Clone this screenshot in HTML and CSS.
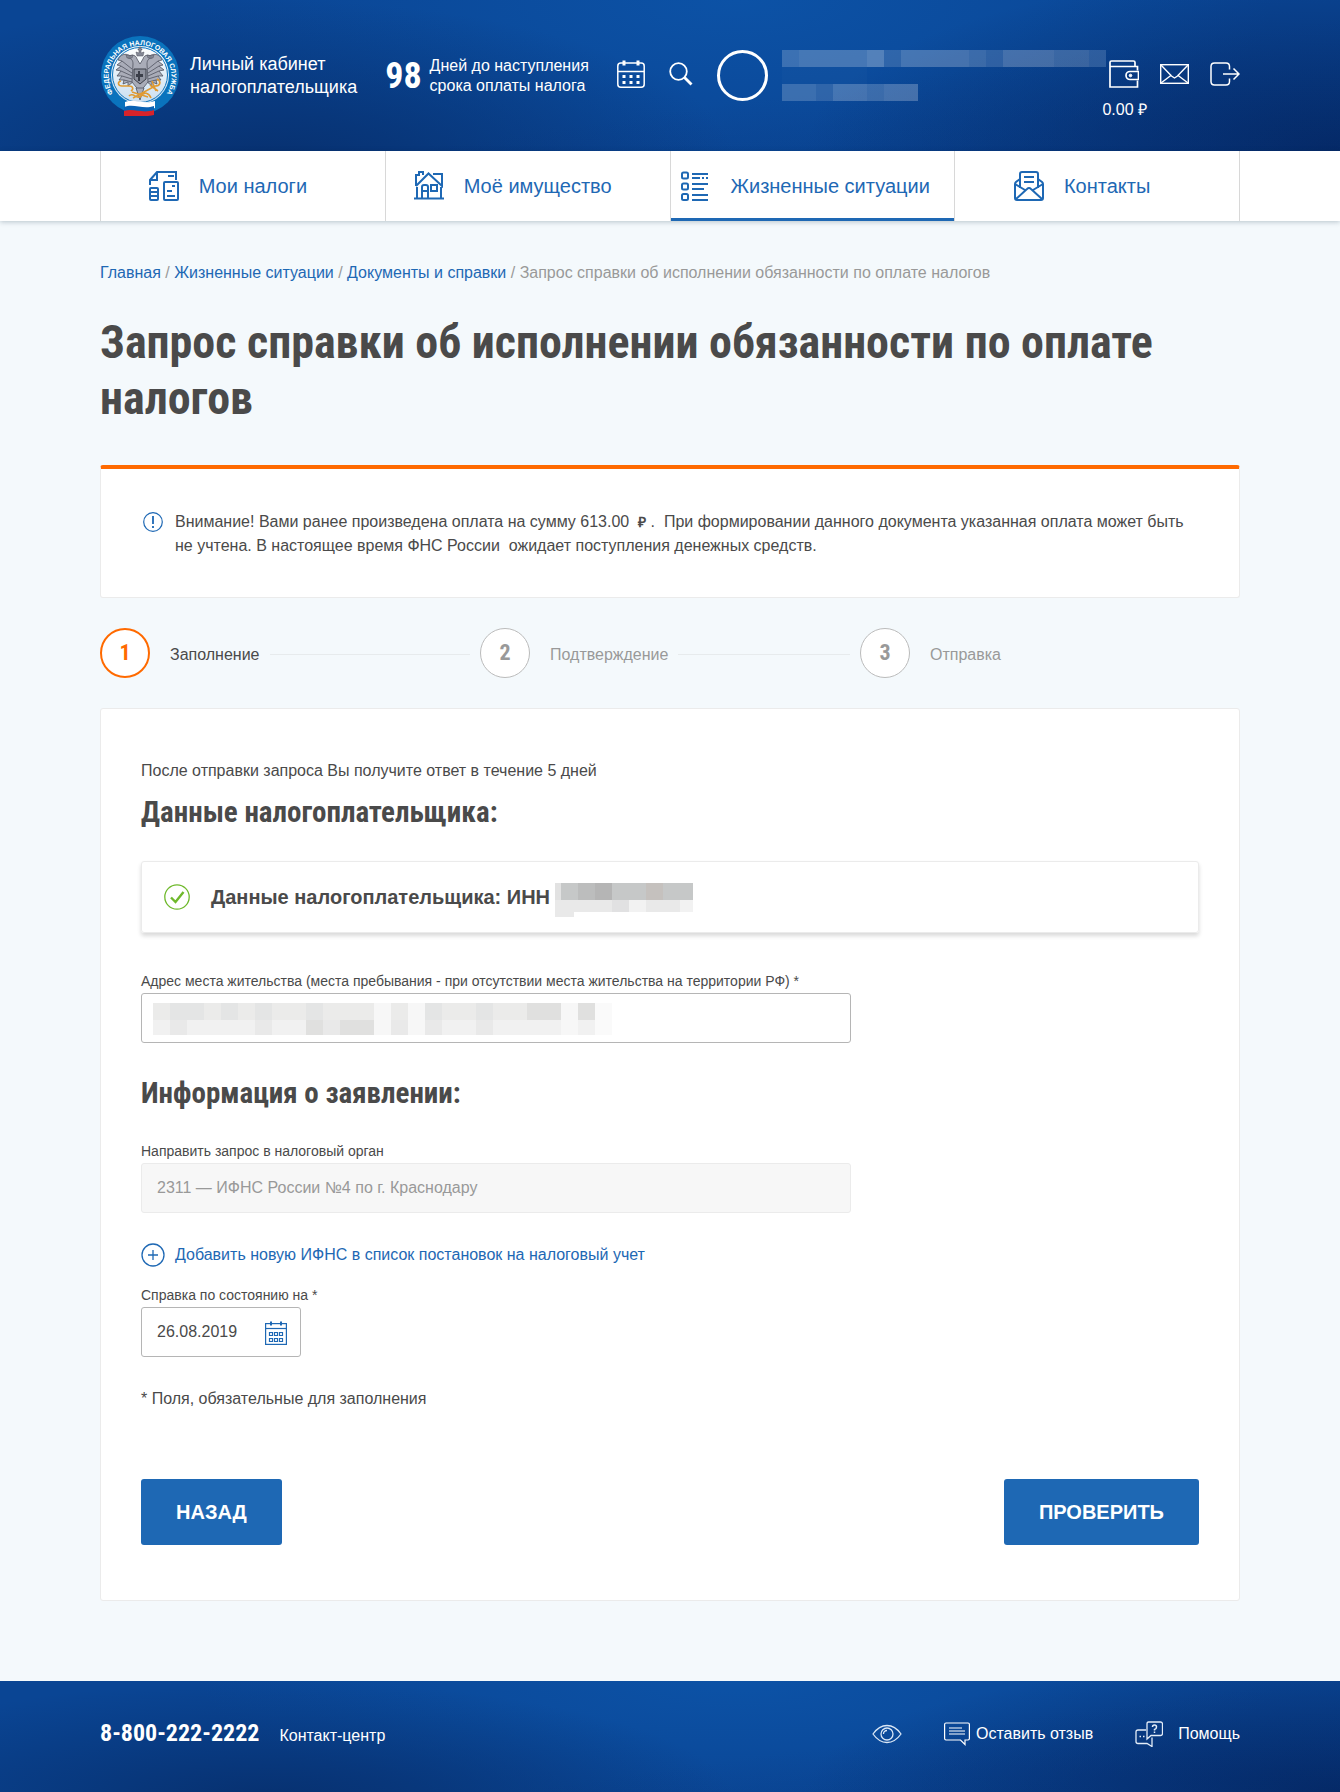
FILE: index.html
```html
<!DOCTYPE html>
<html lang="ru">
<head>
    <meta charset="UTF-8">
    <meta name="viewport" content="width=device-width, initial-scale=1.0">
    <title>Личный кабинет налогоплательщика</title>
    <link rel="stylesheet" href="styles.css">
</head>
<body>
    <header class="header">
        <div class="container header-inner">
            <a class="logo" href="#">
                <svg class="logo-emblem" width="80" height="80" viewBox="0 0 80 80" aria-hidden="true">
                    <defs>
                        <path id="ring" d="M15.500 60.500A31.500 31.500 0 1 1 64.500 60.500"/>
                        <linearGradient id="disc" x1="0" y1="0" x2="0" y2="1">
                            <stop offset="0" stop-color="#ffffff"/>
                            <stop offset="1" stop-color="#c9def0"/>
                        </linearGradient>
                    </defs>
                    <circle cx="40" cy="39" r="39" fill="#0a73bd"/>
                    <circle cx="40" cy="39" r="29" fill="url(#disc)"/>
                    <circle cx="40" cy="39" r="27.500" fill="none" stroke="#0a73bd" stroke-width="1"/>
                    <text class="logo-ring-text"><textPath href="#ring" startOffset="50%" text-anchor="middle">ФЕДЕРАЛЬНАЯ НАЛОГОВАЯ СЛУЖБА</textPath></text>
                    <!-- орёл -->
                    <g fill="#a9acb8" stroke="#50535f" stroke-width="0.800">
                        <path d="M36 27C31 16 21 16 18 24l4 1-5 4 4 1-5 4 5 1-4 5 5 0-3 4 5 0-1 4 5-2 0 4 6-5z"/>
                        <path d="M44 27C49 16 59 16 62 24l-4 1 5 4-4 1 5 4-5 1 4 5-5 0 3 4-5 0 1 4-5-2 0 4-6-5z"/>
                        <path d="M33 28c0-4-2-6-5-6 1-4 8-4 9 1l3 5 3-5c1-5 8-5 9-1-3 0-5 2-5 6l1 18-8 10-8-10z"/>
                        <path d="M36 52l4 12 4-12z"/>
                    </g>
                    <g fill="none" stroke="#50535f" stroke-width="0.800">
                        <path d="M22 25l10 8M21 30l11 7M21 35l11 5M22 40l10 3M24 44l8 2"/>
                        <path d="M58 25l-10 8M59 30l-11 7M59 35l-11 5M58 40l-10 3M56 44l-8 2"/>
                    </g>
                    <path d="M37 20l-1-4 3 1v-3h-1v-1h1v-2h2v2h1v1h-1v3l3-1-1 4zM27 22l-1-3 4 1 3-1-1 3zM48 22l-1-3 3 1 4-1-1 3z" fill="#858996" stroke="#50535f" stroke-width="0.500"/>
                    <path d="M34 33h12v10l-6 5-6-5z" fill="#8f929e" stroke="#3b3e49" stroke-width="1"/>
                    <path d="M38 35h2v3h3v3h-3v4h-2v-4h-2v-3h2z" fill="#3b3e49"/>
                    <g fill="none" stroke="#e09a32" stroke-width="1.600">
                        <path d="M21 45c-4 1-3 5 1 5l7 0c4 0 5 3 2 5"/>
                        <path d="M57 43c5 3 3 7-2 7l-22 12M29 60c4-5 9 5 12 0s8-3 10 2"/>
                        <path d="M50 49l8 6M32 56l16 5M52 45l4 10"/>
                    </g>
                    <!-- флаг -->
                    <path d="M25 66c9-4 18 3 30-1v7c-12 4-21-2-30 1z" fill="#fff"/>
                    <path d="M24 71c10-4 19 3 30-1v6c-12 4-20-2-30 1z" fill="#0a62b4"/>
                    <path d="M24 75c10-3 18 3 30-1v5c-6 2-22 1-30 1z" fill="#d8232a"/>
                </svg>
                <span class="logo-text">Личный кабинет<br>налогоплательщика</span>
            </a>

            <div class="countdown">
                <span class="countdown-number">98</span>
                <span class="countdown-text">Дней до наступления<br>срока оплаты налога</span>
            </div>

            <div class="header-tools">
                <a class="icon-link" href="#" aria-label="Налоговый календарь">
                    <svg width="28" height="28" viewBox="0 0 28 28" fill="none" stroke="#fff" stroke-width="1.500">
                        <rect x="0.800" y="3" width="26.400" height="24.200" rx="3"/>
                        <path d="M1 11.500h26"/>
                        <path d="M7 0.500v5M21 0.500v5" stroke-width="3"/>
                        <path d="M5.500 16.500h3M12.500 16.500h3M19.500 16.500h3M5.500 22.500h3M12.500 22.500h3M19.500 22.500h3" stroke-width="3"/>
                    </svg>
                </a>
                <a class="icon-link" href="#" aria-label="Поиск">
                    <svg width="24" height="24" viewBox="0 0 24 24" fill="none" stroke="#fff">
                        <circle cx="9.500" cy="9.500" r="8.300" stroke-width="1.800"/>
                        <path d="M15.500 15.500l7 7" stroke-width="2.800"/>
                    </svg>
                </a>
            </div>

            <div class="user">
                <span class="user-avatar"></span>
                <svg class="user-name" width="324" height="51" viewBox="0 0 324 51" aria-hidden="true">
                    <g fill="#fff">
                        <path d="M0 0h324v17H0zM0 34h136v17H0z" fill-opacity="0.200"/>
                        <path d="M17 0h68v17H17zM85 0h17v17H85zM119 0h34v17h-34zM153 0h34v17h-34zM221 0h51v17h-51z" fill-opacity="0.050"/>
                        <path d="M85 0h17v17H85z" fill-opacity="0.080"/>
                        <path d="M51 34h34v17H51zM102 34h34v17h-34z" fill-opacity="0.050"/>
                        <path d="M0 17h85v17H0z" fill-opacity="0.020"/>
                    </g>
                    <path d="M102 0h17v17h-17zM204 0h17v17h-17zM307 0h17v17h-17zM34 34h17v17H34z" fill="#0b4798" fill-opacity="0.250"/>
                </svg>
            </div>

            <div class="header-actions">
                <a class="icon-link wallet" href="#" aria-label="Кошелёк">
                    <svg width="30" height="28" viewBox="0 0 30 28" fill="none" stroke="#fff" stroke-width="1.700">
                        <path d="M28.500 10.500V6.500H1V2.500Q1 1 2.500 1h22q1.500 0 1.500 1.500V6M1 5v22h27.500v-6.500"/>
                        <path d="M29.500 11.500h-8.500a4 4 0 0 0 0 8h8.500z"/>
                        <circle cx="21.500" cy="15.500" r="1.300" fill="#fff" stroke-width="1"/>
                    </svg>
                    <span class="wallet-amount">0.00 ₽</span>
                </a>
                <a class="icon-link" href="#" aria-label="Сообщения">
                    <svg width="29" height="20" viewBox="0 0 29 20" fill="none" stroke="#fff" stroke-width="1.400">
                        <rect x="0.700" y="0.700" width="27.600" height="18.600"/>
                        <path d="M1 1l10.500 11 3 2 3-2L28 1M1 19l10.500-8M28 19l-10.500-8"/>
                    </svg>
                </a>
                <a class="icon-link" href="#" aria-label="Выход">
                    <svg width="30" height="24" viewBox="0 0 30 24" fill="none" stroke="#fff" stroke-width="1.500">
                        <path d="M19.500 7.500V4.500q0-3.500-3.500-3.500H4.500Q1 1 1 4.500v15Q1 23 4.500 23H16q3.500 0 3.500-3.500v-3"/>
                        <path d="M13 12h16M23.500 6.500l5.500 5.500-5.500 5.500"/>
                    </svg>
                </a>
            </div>
        </div>
    </header>

    <nav class="nav">
        <ul class="container nav-list">
            <li class="nav-item">
                <a class="nav-link" href="#">
                    <svg width="30" height="30" viewBox="0 0 30 30" fill="none" stroke="#1e68b4" stroke-width="2">
                        <path d="M1 14V9l7-8h19v8M1 9h7V1M19 5h6"/>
                        <rect x="15" y="11" width="14" height="18" rx="1"/>
                        <path d="M23 15h3M18 20h5M18 25h8"/>
                        <rect x="1" y="17" width="8" height="12" rx="1"/>
                        <path d="M1 21h8M1 25h8"/>
                    </svg>
                    <span>Мои налоги</span>
                </a>
            </li>
            <li class="nav-item">
                <a class="nav-link" href="#">
                    <svg width="30" height="29" viewBox="0 0 30 29" fill="none" stroke="#1e68b4" stroke-width="2">
                        <path d="M2 15V4h3V1h4v3M2 15L14.500 2.500 28 15V3h-9M3 16v11M27 16v11M0 27.500h30"/>
                        <path d="M8 27V16q0-2 2-2h2q2 0 2 2v11M8 20h6"/>
                        <rect x="17" y="14" width="6" height="6"/>
                    </svg>
                    <span>Моё имущество</span>
                </a>
            </li>
            <li class="nav-item active">
                <a class="nav-link" href="#">
                    <svg width="30" height="30" viewBox="0 0 30 30" fill="none" stroke="#1e68b4" stroke-width="2">
                        <rect x="1" y="1.500" width="6" height="6" rx="1.500"/>
                        <rect x="1" y="12.500" width="6" height="6" rx="1.500"/>
                        <rect x="1" y="23" width="6" height="6" rx="1.500"/>
                        <path d="M11 3h16M11 7h8M21 7h2M25 7h2M11 13h16M11 18h12M11 24h16M11 29h16"/>
                    </svg>
                    <span>Жизненные ситуации</span>
                </a>
            </li>
            <li class="nav-item">
                <a class="nav-link" href="#">
                    <svg width="30" height="30" viewBox="0 0 30 30" fill="none" stroke="#1e68b4" stroke-width="2">
                        <path d="M6 17V3q0-2 2-2h14q2 0 2 2v14"/>
                        <path d="M6 8l-4 3q-1 1-1 2v14q0 2 2 2h24q2 0 2-2V13q0-1-1-2l-4-3"/>
                        <path d="M1 13l10 6M29 13l-10 6M2 28l11-10q2-2 4 0l11 10M10 6h10M10 11h10"/>
                    </svg>
                    <span>Контакты</span>
                </a>
            </li>
        </ul>
    </nav>

    <main class="container main">
        <div class="breadcrumbs">
            <a href="#">Главная</a> / <a href="#">Жизненные ситуации</a> / <a href="#">Документы и справки</a> / Запрос справки об исполнении обязанности по оплате налогов
        </div>

        <h1>Запрос справки об исполнении обязанности по оплате налогов</h1>

        <div class="notice">
            <svg class="notice-icon" width="20" height="20" viewBox="0 0 20 20" fill="none" stroke="#1e68b4">
                <circle cx="10" cy="10" r="9.300" stroke-width="1.200"/>
                <path d="M10 4v8M10 14v2" stroke-width="1.800"/>
            </svg>
            <p>Внимание! Вами ранее произведена оплата на сумму 613.00 &nbsp;<b class="ruble">₽</b>&nbsp;. &nbsp;При формировании данного документа указанная оплата может быть не учтена. В настоящее время ФНС России &nbsp;ожидает поступления денежных средств.</p>
        </div>

        <ol class="steps">
            <li class="step current">
                <span class="step-number">1</span>
                <span class="step-label">Заполнение</span>
            </li>
            <li class="step">
                <span class="step-number">2</span>
                <span class="step-label">Подтверждение</span>
            </li>
            <li class="step">
                <span class="step-number">3</span>
                <span class="step-label">Отправка</span>
            </li>
        </ol>

        <form class="card">
            <p>После отправки запроса Вы получите ответ в течение 5 дней</p>
            <h2>Данные налогоплательщика:</h2>

            <div class="taxpayer">
                <svg width="27" height="27" viewBox="0 0 27 27" fill="none" stroke="#6fb92c">
                    <circle cx="13" cy="13" r="12.200" stroke-width="1.300"/>
                    <path d="M7 13.500l4.500 4.500 8-10" stroke-width="2.400"/>
                </svg>
                <span class="taxpayer-title">Данные налогоплательщика: ИНН</span>
                <svg class="taxpayer-inn" width="138" height="34" viewBox="0 0 138 34" aria-hidden="true">
                    <path d="M0 0h138v17H0z" fill="#c6c8c8"/>
                    <path d="M0 0h6v17H0z" fill="#e2e2e2"/>
                    <path d="M23 0h17v17H23z" fill="#bcbdbd"/>
                    <path d="M40 0h17v17H40z" fill="#b5b5b5"/>
                    <path d="M91 0h17v17H91z" fill="#c5c1be"/>
                    <path d="M0 17h125v12H19v5H0z" fill="#e9e9e9"/>
                    <path d="M57 17h17v12H57z" fill="#e1e1e2"/>
                    <path d="M74 17h17v12H74zM125 17h13v12h-13z" fill="#f2f2f2"/>
                </svg>
            </div>

            <div class="field">
                <label for="address">Адрес места жительства (места пребывания - при отсутствии места жительства на территории РФ) *</label>
                <div class="input-wrap">
                    <input type="text" id="address" name="address">
                    <svg class="address-value" width="459" height="32" viewBox="0 0 459 32" aria-hidden="true">
                        <path d="M0 0h442v17H0z" fill="#ebebea"/>
                        <path d="M0 17h442v15H0z" fill="#f1f1f1"/>
                        <path d="M17 0h34v17H17zM68 0h17v17H68zM102 0h17v17h-17zM153 0h17v17h-17zM272 0h17v17h-17zM323 0h17v17h-17z" fill="#e4e5e5"/>
                        <path d="M374 0h34v17h-34zM425 0h17v17h-17zM153 17h17v15h-17zM187 17h34v15h-34z" fill="#e0e0df"/>
                        <path d="M17 17h17v15H17zM102 17h17v15h-17zM170 17h17v15h-17zM238 17h17v15h-17zM272 17h17v15h-17zM323 17h17v15h-17z" fill="#e9e9e9"/>
                        <path d="M221 0h17v32h-17zM255 0h17v32h-17zM408 0h17v32h-17z" fill="#f7f7f7"/>
                        <path d="M442 0h17v32h-17z" fill="#fafafa"/>
                    </svg>
                </div>
            </div>

            <h2>Информация о заявлении:</h2>

            <div class="field">
                <label for="office">Направить запрос в налоговый орган</label>
                <input type="text" id="office" name="office" value="2311 — ИФНС России №4 по г. Краснодару" disabled>
            </div>

            <a class="add-link" href="#">
                <svg width="24" height="24" viewBox="0 0 24 24" fill="none" stroke="#1e68b4" stroke-width="1.300">
                    <circle cx="12" cy="12" r="11"/>
                    <path d="M12 7v10M7 12h10"/>
                </svg>
                <span>Добавить новую ИФНС в список постановок на налоговый учет</span>
            </a>

            <div class="field">
                <label for="date">Справка по состоянию на *</label>
                <div class="input-wrap date-wrap">
                    <input type="text" id="date" name="date" value="26.08.2019">
                    <svg class="date-icon" width="22" height="24" viewBox="0 0 22 24" fill="none" stroke="#1e68b4" stroke-width="1.200">
                        <rect x="0.600" y="2.600" width="20.800" height="20.800"/>
                        <path d="M1 7.500h20"/>
                        <path d="M6 0.500v4M16 0.500v4" stroke-width="2"/>
                        <path d="M4.500 11.500h3v3h-3zM9.500 11.500h3v3h-3zM14.500 11.500h3v3h-3zM4.500 17.500h3v3h-3zM9.500 17.500h3v3h-3zM14.500 17.500h3v3h-3z"/>
                    </svg>
                </div>
            </div>

            <p class="required-note">* Поля, обязательные для заполнения</p>

            <div class="buttons">
                <button type="button" class="btn">НАЗАД</button>
                <button type="submit" class="btn">ПРОВЕРИТЬ</button>
            </div>
        </form>
    </main>

    <footer class="footer">
        <div class="container footer-inner">
            <div class="footer-contact">
                <a class="phone" href="tel:88002222222">8-800-222-2222</a>
                <span>Контакт-центр</span>
            </div>
            <div class="footer-links">
                <a class="footer-link" href="#" aria-label="Версия для слабовидящих">
                    <svg width="30" height="20" viewBox="0 0 30 20" fill="none" stroke="#d9e6f5" stroke-width="1.300">
                        <path d="M1 10Q7 1.500 15 1.500T29 10Q23 18.500 15 18.500T1 10z"/>
                        <circle cx="15" cy="10" r="6"/>
                        <path d="M11.500 10a3.500 3.500 0 0 1 3.500-3.500"/>
                    </svg>
                </a>
                <a class="footer-link feedback" href="#">
                    <svg width="26" height="24" viewBox="0 0 26 24" fill="none" stroke="#fff" stroke-width="1.200">
                        <path d="M2 1h22q1.400 0 1.400 1.400v14.200q0 1.400-1.400 1.400h-3v4.500L16.500 18H2Q0.600 18 0.600 16.600V2.400Q0.600 1 2 1z"/>
                        <path d="M5 6h13M5 9h16M5 12h16"/>
                    </svg>
                    <span>Оставить отзыв</span>
                </a>
                <a class="footer-link help" href="#">
                    <svg width="28" height="26" viewBox="0 0 28 26" fill="none" stroke="#e4edf8" stroke-width="1.300">
                        <path d="M13.500 1h12q2 0 2 2v9.500q0 2-2 2H16l-4 3.500V3q0-2 1.500-2z"/>
                        <path d="M11 9H3Q1 9 1 11v9.500q0 2 2 2h9l5 3v-9"/>
                        <path d="M4.500 15.500h1.500M8 15.500h1.500"/>
                        <path d="M17.500 6q0-2 2-2t2 2-2 2.500v1M19.500 10.500v1.500" stroke-width="1.500"/>
                    </svg>
                    <span>Помощь</span>
                </a>
            </div>
        </div>
    </footer>
</body>
</html>
```

FILE: styles.css
```css
* {
    margin: 0;
    padding: 0;
    box-sizing: border-box;
}

body {
    font-family: "Liberation Sans", Arial, sans-serif;
    font-size: 16px;
    line-height: 24px;
    color: #4a4a4a;
    background: #f4f9fc;
}

a {
    color: #1e68b4;
    text-decoration: none;
}

svg {
    display: block;
    flex-shrink: 0;
}

.container {
    width: 100%;
    max-width: 1180px;
    margin: 0 auto;
    padding: 0 20px;
}

h1,
h2,
.countdown-number,
.step-number,
.phone {
    font-family: "Roboto Condensed", Roboto, sans-serif;
    font-weight: bold;
}

/* header */
.header,
.footer {
    color: #fff;
    background:
        linear-gradient(172deg, transparent 60%, rgba(4, 38, 100, 0.150) 90%),
        radial-gradient(ellipse 40% 120% at 100% 100%, #052a68, transparent),
        radial-gradient(ellipse 35% 110% at 20% 110%, #07306f, transparent),
        radial-gradient(ellipse 40% 120% at 55% 0, #0c52a6, transparent),
        #0a4594;
}

.header a,
.footer a {
    color: #fff;
}

.header-inner {
    display: flex;
    align-items: center;
    height: 151px;
}

.logo {
    display: flex;
    align-items: center;
    gap: 10px;
    margin-right: 28px;
}

.logo-ring-text {
    fill: #fff;
    font-size: 7px;
    font-weight: bold;
}

.logo-text {
    font-size: 18px;
    line-height: 23px;
}

.countdown {
    display: flex;
    align-items: center;
    gap: 8px;
}

.countdown-number {
    font-size: 36px;
    line-height: 40px;
}

.countdown-text {
    line-height: 20px;
    white-space: nowrap;
}

.header-tools {
    display: flex;
    align-items: center;
    gap: 24px;
    margin-left: 28px;
    padding-bottom: 4px;
}

.user {
    display: flex;
    align-items: center;
    gap: 14px;
    margin-left: 24px;
}

.user-avatar {
    width: 51px;
    height: 51px;
    border: 3px solid #fff;
    border-radius: 50%;
}

.header-actions {
    display: flex;
    align-items: center;
    gap: 21px;
    margin-left: auto;
    padding-bottom: 4px;
}

.wallet {
    position: relative;
}

.wallet-amount {
    position: absolute;
    top: 100%;
    right: -8px;
    padding-top: 10px;
    white-space: nowrap;
}

/* navigation */
.nav {
    position: relative;
    background: #fff;
    box-shadow: 0 1px 5px rgba(0, 40, 60, 0.250);
}

.nav-list {
    display: flex;
    list-style: none;
}

.nav-item {
    flex: 1;
    min-width: 0;
    border-left: 1px solid #d8d8d8;
}

.nav-item:last-child {
    border-right: 1px solid #d8d8d8;
}

.nav-link {
    display: flex;
    align-items: center;
    justify-content: safe center;
    gap: 20px;
    height: 70px;
    padding: 2px 40px 0 10px;
    font-size: 20px;
    white-space: nowrap;
    border-bottom: 3px solid transparent;
}

.nav-item.active .nav-link {
    border-color: #1e68b4;
}

/* content */
.main {
    padding-top: 40px;
    padding-bottom: 80px;
}

.breadcrumbs {
    color: #999;
}

h1 {
    margin-top: 29px;
    font-size: 46px;
    line-height: 56px;
}

.notice {
    display: flex;
    gap: 10px;
    margin-top: 39px;
    padding: 41px 40px 39px;
    border: 1px solid #ebebeb;
    border-top: 4px solid #ff6a00;
    border-radius: 3px;
    background: #fff;
    min-height: 132px;
}

.notice-icon {
    margin: 2px;
}

.ruble {
    font-size: 14px;
}

.steps {
    display: flex;
    margin: 30px 0;
    list-style: none;
}

.step {
    display: flex;
    flex: 1;
    align-items: center;
    color: #999;
}

.step::after {
    content: "";
    flex: 1;
    height: 1px;
    margin: 2px 10px 0;
    background: #e7ebed;
}

.step:last-child::after {
    background: none;
}

.step-number {
    width: 50px;
    height: 50px;
    margin-right: 20px;
    border: 1px solid #bbb;
    border-radius: 50%;
    background: #fff;
    font-size: 22px;
    line-height: 48px;
    text-align: center;
}

.step-label {
    padding-top: 3px;
}

.step.current {
    color: #4a4a4a;
}

.step.current .step-number {
    border: 2px solid #ff6a00;
    line-height: 46px;
    color: #ff6a00;
}

.card {
    padding: 50px 40px 55px;
    border: 1px solid #ebebeb;
    border-radius: 3px;
    background: #fff;
}

h2 {
    margin-top: 9px;
    font-size: 29px;
    line-height: 40px;
}

.taxpayer {
    display: flex;
    align-items: center;
    gap: 20px;
    min-height: 72px;
    margin: 29px 0 36px;
    padding: 0 22px;
    border: 1px solid #ebebeb;
    border-radius: 3px;
    box-shadow: 0 3px 4px rgba(0, 0, 0, 0.150);
}

.taxpayer-title {
    font-size: 20px;
    font-weight: bold;
}

.taxpayer-inn {
    margin: 6px 0 0 -15px;
}

.field {
    max-width: 710px;
}

.field label {
    display: block;
    font-size: 14px;
    line-height: 24px;
}

.field input {
    display: block;
    width: 100%;
    height: 50px;
    padding: 0 15px;
    border: 1px solid #b5b5b5;
    border-radius: 3px;
    background: #fff;
    font: inherit;
    color: #4a4a4a;
}

.field input:disabled {
    border-color: #ebebeb;
    background: #f7f7f7;
    color: #999;
}

.input-wrap {
    position: relative;
}

.address-value {
    position: absolute;
    top: 10px;
    left: 12px;
}

.field + h2 {
    margin: 30px 0 26px;
}

.date-wrap {
    width: 160px;
}

.date-icon {
    position: absolute;
    top: 14px;
    right: 14px;
}

.add-link {
    display: flex;
    align-items: center;
    gap: 10px;
    margin: 30px 0 16px;
}

.required-note {
    margin-top: 30px;
}

.buttons {
    display: flex;
    justify-content: space-between;
    margin-top: 68px;
}

.btn {
    height: 66px;
    padding: 0 35px;
    border: none;
    border-radius: 3px;
    background: #1e68b4;
    font: bold 20px "Liberation Sans", Arial, sans-serif;
    color: #fff;
    cursor: pointer;
}

.btn:hover {
    background: #18579a;
}

/* footer */
.footer-inner {
    display: flex;
    align-items: center;
    justify-content: space-between;
    height: 111px;
    padding-bottom: 5px;
}

.footer-contact {
    display: flex;
    align-items: baseline;
    gap: 20px;
}

.phone {
    font-size: 24px;
}

.footer-links {
    display: flex;
    align-items: center;
    gap: 42px;
}

.footer-link {
    display: flex;
    align-items: center;
    gap: 6px;
}

.footer-link.help {
    gap: 15px;
}
```
